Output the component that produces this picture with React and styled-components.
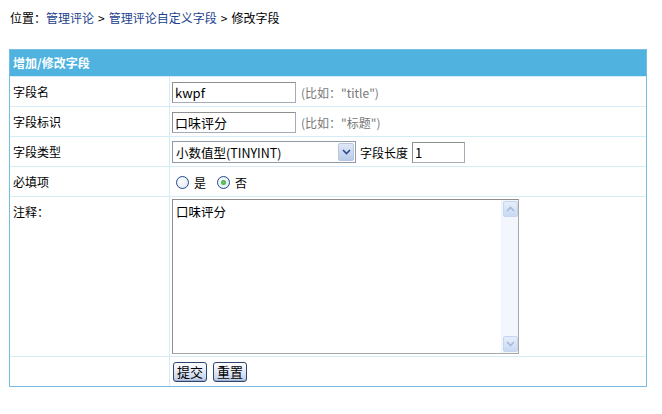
import React from "react";
import styled, { createGlobalStyle } from "styled-components";

const GlobalStyle = createGlobalStyle`
  html, body { margin: 0; padding: 0; background: #fff; }
  body {
    font-family: "Noto Sans CJK SC", "DejaVu Sans", sans-serif;
    font-size: 12px;
    color: #000;
  }
  * { box-sizing: border-box; }
`;

const Page = styled.div`
  padding: 10px 15px 0 9px;
  width: 662px;
`;

const Breadcrumb = styled.div`
  height: 16px;
  line-height: 16px;
  padding-left: 1px;
  color: #000;
  margin-bottom: 23px;
`;

const Crumb = styled.a`
  color: #1c3f8c;
  text-decoration: none;
`;

const Sep = styled.span`
  margin: 0 4px;
`;

const Panel = styled.div`
  width: 638px;
  border: 1px solid #76bde2;
`;

const Header = styled.div`
  height: 26px;
  line-height: 26px;
  background: #50b3df;
  color: #fff;
  font-weight: bold;
  padding-left: 3px;
`;

const Row = styled.div`
  display: grid;
  grid-template-columns: 160px 1fr;
  height: ${(p) => p.$h || 30}px;
  border-top: 1px solid #d3ecf6;
`;

const Label = styled.div`
  border-right: 1px solid #d3ecf6;
  padding-left: 3px;
  display: flex;
  align-items: ${(p) => (p.$top ? "flex-start" : "center")};
  padding-top: ${(p) => (p.$top ? "6px" : "0")};
`;

const Field = styled.div`
  display: flex;
  align-items: ${(p) => (p.$top ? "flex-start" : "center")};
  padding-left: 2px;
  padding-top: ${(p) => (p.$top ? "2px" : "1px")};
  gap: 4px;
`;

const TextInput = styled.input`
  width: ${(p) => p.$w}px;
  height: 21px;
  border: 1px solid #a5acb5;
  border-top-color: #8f8f8f;
  border-left-color: #8f8f8f;
  font: inherit;
  font-size: 13px;
  padding: 0 2px;
  color: #000;
  outline: none;
`;

const Hint = styled.span`
  color: #777;
  margin-left: 1px;
`;

const SelectBox = styled.div`
  width: 184px;
  height: 22px;
  border: 1px solid #8f9aa6;
  display: flex;
  align-items: center;
  padding-left: 3px;
  font-size: 12.5px;
  position: relative;
`;

const SelectText = styled.span`
  flex: 1;
`;

const SelectArrow = styled.span`
  width: 16px;
  height: 18px;
  margin-right: 1px;
  border: 1px solid #b6c5e0;
  border-radius: 2px;
  background: linear-gradient(#dfe8f7, #b9cbea);
  display: flex;
  align-items: center;
  justify-content: center;
`;

const RadioGroup = styled.div`
  display: flex;
  align-items: center;
  gap: 5px;
  padding-left: 4px;
`;

const Radio = styled.span`
  width: 13px;
  height: 13px;
  border-radius: 50%;
  border: 1px solid #1e4a8a;
  background: radial-gradient(circle at 40% 40%, #fff, #dde4ee);
  display: inline-flex;
  align-items: center;
  justify-content: center;
  margin-left: ${(p) => (p.$first ? 0 : 6)}px;
`;

const Dot = styled.span`
  width: 5px;
  height: 5px;
  border-radius: 50%;
  background: radial-gradient(circle, #6cd46c, #2a9a2a);
`;

const AreaWrap = styled.div`
  width: 347px;
  height: 155px;
  border: 1px solid #8e8e8e;
  border-right-color: #a8a8a8;
  border-bottom-color: #a8a8a8;
  display: flex;
`;

const Area = styled.textarea`
  flex: 1;
  border: none;
  resize: none;
  outline: none;
  font: inherit;
  font-size: 12.5px;
  padding: 2px 3px;
  overflow: hidden;
`;

const ScrollBar = styled.div`
  width: 17px;
  background: #f3f7fd;
  border-left: 1px solid #eef3fb;
  display: flex;
  flex-direction: column;
  justify-content: space-between;
  padding: 1px 0 1px 1px;
`;

const ScrollBtn = styled.div`
  height: 16px;
  width: 15px;
  border: 1px solid #c6d6f0;
  border-radius: 2px;
  background: linear-gradient(#e6eefb, #c9d9f3);
  display: flex;
  align-items: center;
  justify-content: center;
`;

const Buttons = styled.div`
  display: flex;
  align-items: center;
  gap: 6px;
  padding-left: 3px;
  padding-top: 1px;
`;

const Btn = styled.button`
  height: 20px;
  padding: 0 3px;
  font: inherit;
  font-size: 13px;
  line-height: 16px;
  color: #000;
  border: 1px solid #2c4670;
  border-radius: 3px;
  background: linear-gradient(#ffffff, #e4ebf6 45%, #bccbe6);
  box-shadow: inset 0 -1px 0 #9fb1d3;
`;

const Chevron = ({ dir = "down", color = "#4d6185" }) => (
  <svg width="9" height="6" viewBox="0 0 9 6">
    <path
      d={dir === "down" ? "M1 1 L4.5 4.5 L8 1" : "M1 5 L4.5 1.5 L8 5"}
      fill="none"
      stroke={color}
      strokeWidth="1.6"
    />
  </svg>
);

export default function App() {
  return (
    <>
      <GlobalStyle />
      <Page>
        <Breadcrumb>
          位置：<Crumb href="#">管理评论</Crumb>
          <Sep>&gt;</Sep>
          <Crumb href="#">管理评论自定义字段</Crumb>
          <Sep>&gt;</Sep>修改字段
        </Breadcrumb>
        <Panel>
          <Header>增加/修改字段</Header>
          <Row $h={30}>
            <Label>字段名</Label>
            <Field>
              <TextInput $w={124} defaultValue="kwpf" />
              <Hint>(比如："title")</Hint>
            </Field>
          </Row>
          <Row $h={30}>
            <Label>字段标识</Label>
            <Field>
              <TextInput $w={124} defaultValue="口味评分" />
              <Hint>(比如："标题")</Hint>
            </Field>
          </Row>
          <Row $h={30}>
            <Label>字段类型</Label>
            <Field>
              <SelectBox>
                <SelectText>小数值型(TINYINT)</SelectText>
                <SelectArrow>
                  <Chevron color="#2a4a8a" />
                </SelectArrow>
              </SelectBox>
              <span>字段长度</span>
              <TextInput $w={53} defaultValue="1" />
            </Field>
          </Row>
          <Row $h={30}>
            <Label>必填项</Label>
            <Field>
              <RadioGroup>
                <Radio $first />
                <span>是</span>
                <Radio>
                  <Dot />
                </Radio>
                <span>否</span>
              </RadioGroup>
            </Field>
          </Row>
          <Row $h={160}>
            <Label $top>注释：</Label>
            <Field $top>
              <AreaWrap>
                <Area defaultValue="口味评分" />
                <ScrollBar>
                  <ScrollBtn>
                    <Chevron dir="up" color="#a9bbdb" />
                  </ScrollBtn>
                  <ScrollBtn>
                    <Chevron color="#a9bbdb" />
                  </ScrollBtn>
                </ScrollBar>
              </AreaWrap>
            </Field>
          </Row>
          <Row $h={30}>
            <Label />
            <Buttons>
              <Btn>提交</Btn>
              <Btn>重置</Btn>
            </Buttons>
          </Row>
        </Panel>
      </Page>
    </>
  );
}
